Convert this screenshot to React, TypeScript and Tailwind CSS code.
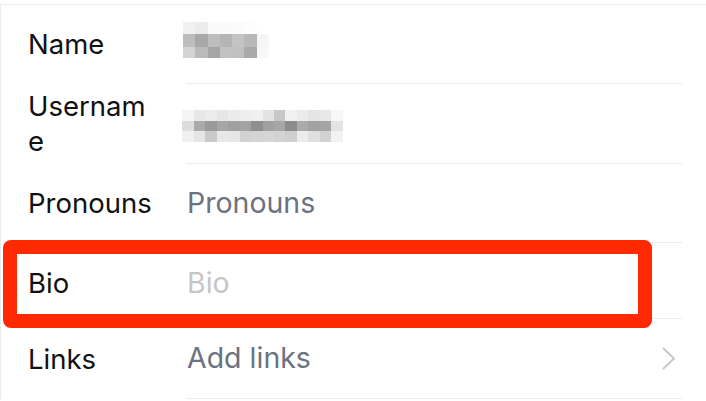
import React from "react";

const nameRows: string[][] = [
  ["#f0f0f0", "#ececec", "#fafafa", "#fafafa", "#fbfbfb", "#fdfdfd", "#ffffff"],
  ["#bdbdbd", "#a8a8a8", "#bdbdbd", "#b5b5b5", "#c4c4c4", "#b8b8b8", "#f6f6f6"],
  ["#d4d4d4", "#bababa", "#a5a5a5", "#c2c2c2", "#c0c0c0", "#a9a9a9", "#f8f8f8"],
];

const userRows: string[][] = [
  ["#f5f5f5", "#e8e8e8", "#ececec", "#e6e6e6", "#ebebeb", "#eeeeee", "#f0f0f0", "#e3e3e3", "#c8c8c8", "#f0f0f0", "#ebebeb", "#e5e5e5", "#e8e8e8", "#f7f7f7"],
  ["#dcdcdc", "#aaaaaa", "#9a9a9a", "#a6a6a6", "#a0a0a0", "#a3a3a3", "#8f8f8f", "#a1a1a1", "#a6a6a6", "#8c8c8c", "#ababab", "#a2a2a2", "#a5a5a5", "#e3e3e3"],
  ["#f0f0f0", "#e5e5e5", "#cacaca", "#e8e8e8", "#e6e6e6", "#d2d2d2", "#d4d4d4", "#d6d6d6", "#d3d3d3", "#cfcfcf", "#ececec", "#e0e0e0", "#d2d2d2", "#f2f2f2"],
];

function Mosaic({ rows, cw, ch, className }: { rows: string[][]; cw: number; ch: number; className?: string }) {
  const w = rows[0].length * cw;
  const h = rows.length * ch;
  return (
    <svg width={w} height={h} viewBox={`0 0 ${w} ${h}`} className={className} shapeRendering="crispEdges">
      {rows.map((r, y) =>
        r.map((c, x) => <rect key={`${x}-${y}`} x={x * cw} y={y * ch} width={cw + 0.5} height={ch + 0.5} fill={c} />)
      )}
    </svg>
  );
}

function Row({
  label,
  h,
  pt,
  children,
  chevron,
}: {
  label: React.ReactNode;
  h: string;
  pt?: string;
  children?: React.ReactNode;
  chevron?: boolean;
}) {
  return (
    <div className={`flex ${h}`}>
      <div className={`w-[185px] shrink-0 pl-[27px] flex items-center ${pt ?? ""}`}>
        <div className="w-[124px] break-all text-[27.5px] leading-[35px] text-[#111111]">{label}</div>
      </div>
      <div className={`flex-1 mr-[24px] border-b border-[#ececec] flex items-center ${pt ?? ""}`}>
        <div className="flex-1 flex items-center">{children}</div>
        {chevron && (
          <svg width="14" height="24" viewBox="0 0 14 24" className="mr-[6px]">
            <polyline points="1.5,1.5 12,11.5 1.5,21.5" fill="none" stroke="#c6c8ce" strokeWidth="2" strokeLinecap="round" strokeLinejoin="round" />
          </svg>
        )}
      </div>
    </div>
  );
}

export default function App() {
  return (
    <div className="w-[706px] h-[401px] bg-white overflow-hidden relative" style={{ fontFamily: "Inter, 'Noto Sans', sans-serif" }}>
      <div className="pt-[4px]">
        <div className="border-t border-l border-[#ececec]">
          <Row label="Name" h="h-[79px]">
            <Mosaic rows={nameRows} cw={12.3} ch={12.3} className="ml-[-3px] mt-[-8px]" />
          </Row>
          <Row label="Username" h="h-[80px]">
            <Mosaic rows={userRows} cw={11.5} ch={10.7} className="ml-[-4px] mt-[5px]" />
          </Row>
          <Row label="Pronouns" h="h-[79px]">
            <span className="text-[28.5px] text-[#6c727f] ml-[1px]">Pronouns</span>
          </Row>
          <Row label="Bio" h="h-[76px]" pt="pt-[5px]">
            <span className="text-[28.5px] text-[#c6c6c6] ml-[1px]">Bio</span>
          </Row>
          <Row label="Links" h="h-[80px]" chevron>
            <span className="text-[28.5px] text-[#6c727f] ml-[1px]">Add links</span>
          </Row>
        </div>
      </div>
      <div className="absolute left-[3px] top-[240px] w-[649px] h-[88px] border-[14px] border-[#ff2a00] rounded-[8px] pointer-events-none" />
    </div>
  );
}
